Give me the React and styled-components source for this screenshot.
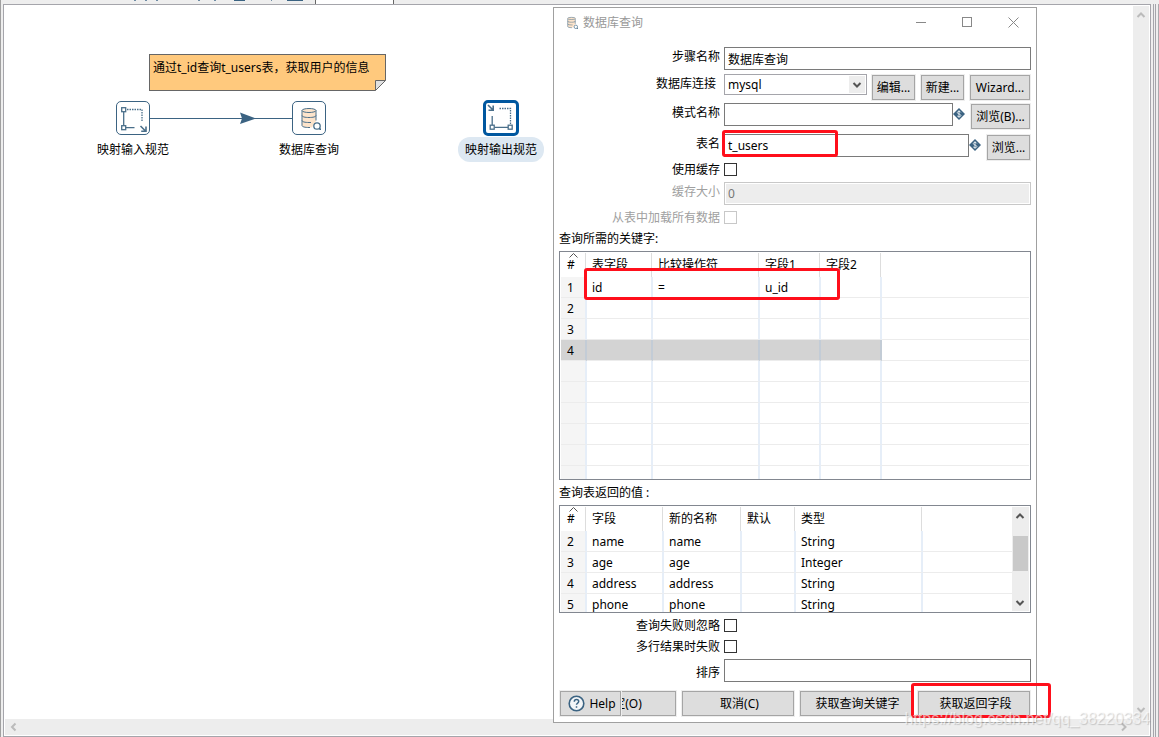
import React from 'react'
import styled, { createGlobalStyle } from 'styled-components'

const returnFields = [
    { no: 2, field: 'name', type: 'String' },
    { no: 3, field: 'age', type: 'Integer' },
    { no: 4, field: 'address', type: 'String' },
    { no: 5, field: 'phone', type: 'String' },
]

function DatabaseIcon({ size }) {
    return (
        <svg width={size} height={size} viewBox="0 0 24 24" fill="none" stroke="#4a6f8a" strokeWidth="1">
            <path d="M5 4.500v15c0 1.300 3 2 7 2s3-.2 3-.2l4-6V4.500z" fill="#fde4cb" stroke="none" />
            <path d="M5 4.500v15c0 1.300 3 2 7 2h1M19 4.500v10" />
            <ellipse cx="12" cy="4.500" rx="7" ry="2" fill="#fde4cb" />
            <path d="M5 9.500c0 1.300 3 2 7 2s7-.7 7-2M5 14.500c0 1.300 3 2 7 2h2" />
            <circle cx="20" cy="20" r="3.200" fill="#fff" strokeWidth="1.300" />
            <path d="M22.300 22.300l2.200 2.200" strokeWidth="1.700" />
        </svg>
    )
}

function MappingInputIcon() {
    return (
        <svg width="32" height="32" viewBox="0 0 32 32" fill="none" stroke="#4a6f8a" strokeWidth="1.3">
            <rect x="4.700" y="5.700" width="4" height="4" />
            <rect x="4.700" y="23.700" width="4" height="4" />
            <path d="M6.700 10v13.500M9 25.700h8.500" />
            <path d="M10 7.500h15V19" strokeDasharray="1.500 1" />
            <path d="M23.500 24l5 5M29 24.500v4.800h-4.800" strokeWidth="1.600" />
        </svg>
    )
}

function MappingOutputIcon() {
    return (
        <svg width="30" height="30" viewBox="0 0 30 30" fill="none" stroke="#4a6f8a" strokeWidth="1.3">
            <rect x="4.200" y="22.200" width="4" height="4" />
            <rect x="22.200" y="22.200" width="4" height="4" />
            <path d="M6.200 13v9M8.500 24.300h13.500" />
            <path d="M13.500 5.500h11V21" strokeDasharray="1.500 1" />
            <path d="M2 2l5 5M7.200 2.500v4.700H2.500" strokeWidth="1.600" />
        </svg>
    )
}

function VariableIcon() {
    return (
        <Diamond width="12" height="12" viewBox="0 0 12 12">
            <path d="M6 0l6 6-6 6-6-6z" fill="#3b6382" />
            <path d="M7.800 4.400C7.500 3 4.300 3 4.300 4.600S7.900 5.900 7.900 7.500 4.600 9.100 4.200 7.800M6 2.300v7.400" fill="none" stroke="#dfe8ee" />
        </Diamond>
    )
}

function Chevron({ dir, color }) {
    const paths = {
        up: 'M1.500 7L5 3.500 8.500 7',
        down: 'M1.500 3L5 6.500 8.500 3',
        left: 'M6.500 1.500L3 5l3.500 3.500',
        right: 'M3 1.500L6.500 5 3 8.500',
    }
    return (
        <svg width="10" height="10" viewBox="0 0 10 10" fill="none" stroke={color} strokeWidth="2">
            <path d={paths[dir]} />
        </svg>
    )
}

function SortMark() {
    return (
        <SortSvg width="9" height="5" viewBox="0 0 9 5" fill="none" stroke="#555">
            <path d="M.500 4.500l4-4 4 4" />
        </SortSvg>
    )
}

function KeysTable() {
    return (
        <TableFrame $height={229}>
            <Grid>
                <colgroup>
                    <Col $w={26} /><Col $w={66} /><Col $w={107} /><Col $w={61} /><Col $w={61} /><col />
                </colgroup>
                <thead>
                    <tr>
                        <Th $num># <SortMark /></Th>
                        <Th>表字段</Th>
                        <Th>比较操作符</Th>
                        <Th>字段1</Th>
                        <Th>字段2</Th>
                        <Th />
                    </tr>
                </thead>
                <tbody>
                    {[1, 2, 3, 4, 5, 6, 7, 8, 9, 10].map((n) => (
                        <Tr key={n} $selected={n === 4}>
                            <Td $num>{n <= 4 ? n : ''}</Td>
                            <Td>{n === 1 ? 'id' : ''}</Td>
                            <Td>{n === 1 ? '=' : ''}</Td>
                            <Td>{n === 1 ? 'u_id' : ''}</Td>
                            <Td />
                            <Td />
                        </Tr>
                    ))}
                </tbody>
            </Grid>
        </TableFrame>
    )
}

function ReturnTable() {
    return (
        <TableFrame $height={108}>
            <Grid>
                <colgroup>
                    <Col $w={26} /><Col $w={77} /><Col $w={78} /><Col $w={54} /><Col $w={127} /><col />
                </colgroup>
                <thead>
                    <tr>
                        <Th $num># <SortMark /></Th>
                        <Th>字段</Th>
                        <Th>新的名称</Th>
                        <Th>默认</Th>
                        <Th>类型</Th>
                        <Th />
                    </tr>
                </thead>
                <tbody>
                    {returnFields.map((row) => (
                        <Tr key={row.no}>
                            <Td $num>{row.no}</Td>
                            <Td>{row.field}</Td>
                            <Td>{row.field}</Td>
                            <Td />
                            <Td>{row.type}</Td>
                            <Td />
                        </Tr>
                    ))}
                </tbody>
            </Grid>
            <TableScroll>
                <Chevron dir="up" color="#555" />
                <Thumb />
                <Chevron dir="down" color="#555" />
            </TableScroll>
        </TableFrame>
    )
}

function LookupDialog() {
    return (
        <Dialog>
            <TitleBar>
                <DatabaseIcon size={13} />
                <Title>数据库查询</Title>
                <WindowButton aria-label="Minimize">
                    <svg width="11" height="11" stroke="#888"><path d="M0 5.500h10" /></svg>
                </WindowButton>
                <WindowButton aria-label="Maximize">
                    <svg width="11" height="11" stroke="#888" fill="none"><rect x=".5" y=".5" width="9" height="9" /></svg>
                </WindowButton>
                <WindowButton aria-label="Close">
                    <svg width="11" height="11" stroke="#888"><path d="M.500.500l10 10M10.500.500l-10 10" /></svg>
                </WindowButton>
            </TitleBar>
            <Body>
                <Row>
                    <Label htmlFor="step">步骤名称</Label>
                    <Input id="step" defaultValue="数据库查询" />
                </Row>
                <Row $gap={4}>
                    <Label htmlFor="conn" $inset>数据库连接</Label>
                    <SelectBox>
                        <Select id="conn" defaultValue="mysql">
                            <option>mysql</option>
                        </Select>
                        <SelectArrow><Chevron dir="down" color="#555" /></SelectArrow>
                    </SelectBox>
                    <Button $w={45} $space={4}>编辑...</Button>
                    <Button $w={45} $space={4}>新建...</Button>
                    <Button $w={62} $space={4}>Wizard...</Button>
                </Row>
                <Row $gap={2}>
                    <Label htmlFor="schema">模式名称</Label>
                    <Input id="schema" />
                    <VariableIcon />
                    <Button $w={61} $space={5}>浏览(B)...</Button>
                </Row>
                <Row $gap={4}>
                    <Label htmlFor="table">表名</Label>
                    <Input id="table" defaultValue="t_users" />
                    <VariableIcon />
                    <Button $w={45} $space={5}>浏览...</Button>
                </Row>
                <CheckRow>
                    <Label htmlFor="cache">使用缓存</Label>
                    <CheckBox id="cache" type="checkbox" />
                </CheckRow>
                <Row $gap={4}>
                    <Label htmlFor="size" $off>缓存大小</Label>
                    <Input id="size" defaultValue="0" disabled />
                </Row>
                <CheckRow $gap={4}>
                    <Label htmlFor="all" $off>从表中加载所有数据</Label>
                    <CheckBox id="all" type="checkbox" disabled />
                </CheckRow>
                <SectionTitle>查询所需的关键字:</SectionTitle>
                <KeysTable />
                <SectionTitle>查询表返回的值 :</SectionTitle>
                <ReturnTable />
                <CheckRow $gap={4}>
                    <Label htmlFor="ignore">查询失败则忽略</Label>
                    <CheckBox id="ignore" type="checkbox" />
                </CheckRow>
                <CheckRow $gap={4}>
                    <Label htmlFor="multi">多行结果时失败</Label>
                    <CheckBox id="multi" type="checkbox" />
                </CheckRow>
                <Row $gap={4} $end>
                    <Label htmlFor="order">排序</Label>
                    <Input id="order" />
                </Row>
                <Footer>
                    <Button $w={114}>确定(O)</Button>
                    <Button $w={114}>取消(C)</Button>
                    <Button $w={114}>获取查询关键字</Button>
                    <Button $w={114}>获取返回字段</Button>
                    <HelpButton $w={63}>
                        <svg width="17" height="17" viewBox="0 0 17 17" fill="none" stroke="#3b6382">
                            <circle cx="8.500" cy="8.500" r="7.300" strokeWidth="1.600" fill="#f4f6f8" />
                            <path d="M6.300 6.700c0-3 4.400-2.800 4.400-.2 0 1.500-2.200 1.600-2.200 3.300M8.500 11.200v1.600" strokeWidth="1.500" />
                        </svg>
                        Help
                    </HelpButton>
                </Footer>
            </Body>
            <Mark $x={168} $y={122} $w={116} $h={27} />
            <Mark $x={30} $y={260} $w={256} $h={32} />
            <Mark $x={357} $y={675} $w={140} $h={35} />
        </Dialog>
    )
}

function App() {
    return (
        <Screen>
            <GlobalStyle />
            <TabStrip>
                <svg width="310" height="4" viewBox="0 0 310 4" fill="#6f8ba3">
                    <path d="M133 0h2v1h-2zM144 0h2v1h-2zM155 0h2v1h-2zM197 0h2v1h-2zM213 0h2v1h-2zM270 0h1v1h-1z" />
                    <path d="M233 0h11v1h-11zM286 0h16v1h-16z" fill="#3b6382" />
                </svg>
                <Tab />
            </TabStrip>
            <Workspace>
                <Pane>
                    <Canvas />
                    <ScrollBar>
                        <Chevron dir="up" color="#bbb" />
                        <Chevron dir="down" color="#bbb" />
                    </ScrollBar>
                    <ScrollBar $wide>
                        <Chevron dir="left" color="#bbb" />
                        <Chevron dir="right" color="#bbb" />
                    </ScrollBar>
                </Pane>
                <Gutter />
            </Workspace>

            <Note>
                通过t_id查询t_users表，获取用户的信息
                <Fold width="11" height="11" viewBox="0 0 11 11">
                    <path d="M0 11h11V0z" fill="#fff" />
                    <path d="M.500 10.500V.500h10z" fill="#e0e0e0" stroke="#666" />
                </Fold>
            </Note>
            <Hop width="142" height="14" viewBox="0 0 142 14">
                <path d="M0 7.500h142" stroke="#3b6382" />
                <path d="M90 1.500L106 7.500 90 13l2-5.500z" fill="#3b6382" />
            </Hop>
            <Node $x={82} $y={101}>
                <NodeBox><MappingInputIcon /></NodeBox>
                <NodeLabel>映射输入规范</NodeLabel>
            </Node>
            <Node $x={258} $y={101}>
                <NodeBox><DatabaseIcon size={24} /></NodeBox>
                <NodeLabel>数据库查询</NodeLabel>
            </Node>
            <Node $x={450} $y={100}>
                <NodeBox $selected><MappingOutputIcon /></NodeBox>
                <NodeLabel $selected>映射输出规范</NodeLabel>
            </Node>

            <LookupDialog />
            <Watermark>https://blog.csdn.net/qq_38220334</Watermark>
        </Screen>
    )
}

export default App

const GlobalStyle = createGlobalStyle`
* {
box-sizing:border-box;
}
body {
margin:0;
}
body, button, input, select {
font-family:"Noto Sans", "Noto Sans CJK SC", sans-serif;
font-size:12px;
line-height:18px;
color:black;
}
`
const Screen = styled.div`
position:relative;
display:flex;
flex-direction:column;
min-height:100vh;
overflow:hidden;
background:#eeeeee;
border-left:1px solid #a0a0a0;
`
const TabStrip = styled.div`
display:flex;
height:4px;
gap:4px;
`
const Tab = styled.div`
width:79px;
background:white;
border-left:1px solid #666;
border-right:1px solid #666;
`
const Workspace = styled.div`
flex:1;
display:flex;
padding-left:2px;
`
const Pane = styled.div`
flex:1;
display:grid;
grid-template-columns:1fr 16px;
grid-template-rows:1fr 16px;
padding:1px;
background:white;
border:1px solid #a5a5ab;
`
const Gutter = styled.div`
width:8px;
border-right:1px solid #a9a9ad;
background:linear-gradient(90deg, #eee 2px, #a5a5ab 2px, #a5a5ab 3px, #eee 3px, #eee 4px, #a5a5ab 4px, #a5a5ab 5px, #eee 5px);
`
const Canvas = styled.div`
background:white;
`
const ScrollBar = styled.div`
display:flex;
flex-direction:${(p) => (p.$wide ? 'row' : 'column')};
grid-column:${(p) => (p.$wide ? '1 / 3' : 'auto')};
align-items:center;
justify-content:space-between;
padding:${(p) => (p.$wide ? '0 20px 0 4px' : '4px 0')};
background:#ededed;
`
const Note = styled.div`
position:absolute;
left:148px;
top:54px;
width:237px;
height:37px;
padding:4px 3px;
background:#ffc97d;
border:1px solid #666;
white-space:nowrap;
`
const Fold = styled.svg`
position:absolute;
right:-1px;
bottom:-1px;
`
const Hop = styled.svg`
position:absolute;
left:149px;
top:111px;
`
const Node = styled.div`
position:absolute;
left:${(p) => p.$x}px;
top:${(p) => p.$y}px;
width:100px;
display:flex;
flex-direction:column;
align-items:center;
`
const NodeBox = styled.div`
display:flex;
align-items:center;
justify-content:center;
width:${(p) => (p.$selected ? 36 : 34)}px;
height:${(p) => (p.$selected ? 36 : 34)}px;
background:white;
border:${(p) => (p.$selected ? '3px solid #00579f' : '1px solid #3b6382')};
border-radius:5px;
`
const NodeLabel = styled.div`
margin-top:${(p) => (p.$selected ? 1 : 2)}px;
padding:4px 7px 3px;
border-radius:12px;
background:${(p) => (p.$selected ? '#dde8f2' : 'transparent')};
`
const Dialog = styled.section`
position:absolute;
left:552px;
top:7px;
width:484px;
background:white;
border:1px solid #a0a0a0;
`
const TitleBar = styled.div`
display:flex;
align-items:center;
height:28px;
padding-left:11px;
`
const Title = styled.div`
flex:1;
padding:2px 0 0 5px;
color:#999;
`
const WindowButton = styled.button`
display:flex;
align-items:center;
justify-content:center;
width:46px;
height:28px;
padding:0;
border:none;
background:none;
`
const Body = styled.div`
padding:11px 5px 5px;
`
const Row = styled.div`
display:flex;
align-items:${(p) => (p.$end ? 'flex-end' : 'flex-start')};
margin-top:${(p) => p.$gap || 0}px;
`
const CheckRow = styled(Row)`
align-items:center;
height:17px;
`
const Label = styled.label`
flex:none;
width:165px;
padding:1px ${(p) => (p.$inset ? 8 : 4)}px 0 0;
text-align:right;
color:${(p) => (p.$off ? '#a0a0a0' : 'black')};
`
const Input = styled.input`
flex:1;
min-width:0;
height:23px;
padding:0 3px;
background:white;
border:1px solid #7a7a7a;
border-radius:0;
outline:none;
&:disabled {
color:#777;
background:#ededed;
border-color:#c8c8c8;
box-shadow:inset 0 0 0 1px white;
}
`
const CheckBox = styled.input`
appearance:none;
width:13px;
height:13px;
margin:0;
background:white;
border:1px solid #333;
&:disabled {
border-color:#c8c8c8;
}
`
const SelectBox = styled.div`
position:relative;
flex:1;
display:flex;
`
const Select = styled.select`
appearance:none;
width:100%;
height:21px;
padding:0 3px;
background:white;
border:1px solid #a5a5ab;
border-radius:0;
`
const SelectArrow = styled.span`
position:absolute;
top:2px;
right:2px;
display:flex;
align-items:center;
justify-content:center;
width:16px;
height:17px;
background:#ededed;
pointer-events:none;
`
const Button = styled.button`
flex:none;
width:${(p) => p.$w}px;
height:27px;
margin-left:${(p) => p.$space || 0}px;
padding:0;
background:#dddddd;
background-clip:padding-box;
border:1px solid #eeeeee;
box-shadow:inset 0 0 0 1px #a5a5a5;
white-space:nowrap;
`
const HelpButton = styled(Button)`
position:absolute;
left:0;
top:0;
display:flex;
align-items:center;
justify-content:center;
gap:4px;
`
const Diamond = styled.svg`
flex:none;
margin-top:5px;
`
const SectionTitle = styled.div`
margin:4px 0 3px;
`
const TableFrame = styled.div`
display:flex;
align-items:flex-start;
height:${(p) => p.$height}px;
padding:1px;
border:1px solid #828790;
overflow:hidden;
contain:paint;
background:white;
`
const Grid = styled.table`
flex:1;
width:100%;
table-layout:fixed;
border-collapse:separate;
border-spacing:0;
`
const Col = styled.col`
width:${(p) => p.$w}px;
`
const Th = styled.th`
position:relative;
height:24px;
padding:0 0 0 ${(p) => (p.$num ? 6 : 5)}px;
font-weight:normal;
text-align:left;
white-space:nowrap;
border-right:1px solid transparent;
box-shadow:inset -1px 0 #dddddd;
&:last-child {
border:none;
box-shadow:none;
}
`
const SortSvg = styled.svg`
position:absolute;
top:0;
right:8px;
`
const Td = styled.td`
height:21px;
padding:2px 0 0 ${(p) => (p.$num ? 6 : 5)}px;
line-height:18px;
background:${(p) => (p.$num ? '#f5f5f5' : 'white')};
border-right:2px solid #e6eef8;
border-bottom:1px solid #ececec;
&:last-child {
border-right:none;
}
`
const Tr = styled.tr`
${Td}:not(:last-child) {
${(p) => (p.$selected ? 'background:#d3d3d3; border-right-color:#c3ccd6;' : '')}
}
`
const TableScroll = styled.div`
display:flex;
flex-direction:column;
align-items:center;
width:17px;
height:104px;
padding:4px 1px 3px 0;
background:#ededed;
`
const Thumb = styled.div`
width:15px;
height:35px;
margin:15px 0 auto;
background:#c9c9c9;
`
const Footer = styled.div`
position:relative;
display:flex;
justify-content:flex-end;
gap:4px;
margin-top:8px;
> button {
padding-left:3px;
}
`
const Mark = styled.div`
position:absolute;
left:${(p) => p.$x}px;
top:${(p) => p.$y}px;
width:${(p) => p.$w}px;
height:${(p) => p.$h}px;
border:3px solid #ff0f1b;
border-radius:3px;
pointer-events:none;
`
const Watermark = styled.div`
position:absolute;
right:9px;
bottom:7px;
font-family:"Liberation Sans", Arial, sans-serif;
font-size:16px;
line-height:22px;
color:rgba(255, 255, 255, 0.6);
text-shadow:1px 1px 1px rgba(120, 120, 120, 0.35);
pointer-events:none;
`
